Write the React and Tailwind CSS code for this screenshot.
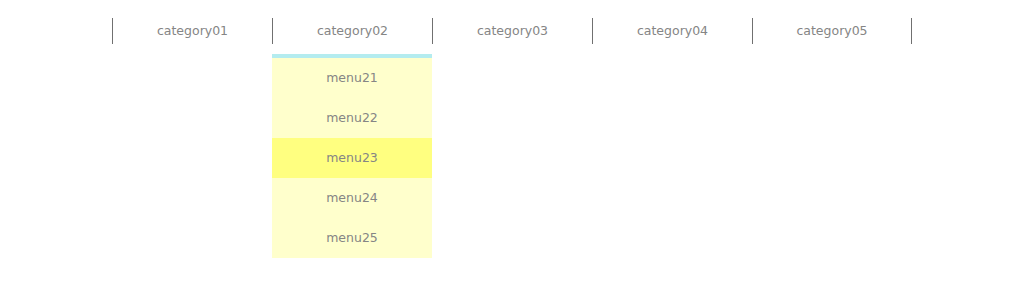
import { useState } from 'react'

const categories = ['category01', 'category02', 'category03', 'category04', 'category05']
const menus = ['menu21', 'menu22', 'menu23', 'menu24', 'menu25']

export default function App() {
  const [open] = useState(1)
  const [hover] = useState(2)

  return (
    <div className="w-[1024px] h-[288px] bg-white font-['DejaVu_Sans',sans-serif] text-[12.5px] text-[#858585]">
      <ul className="flex w-[801px] ml-[112px] pt-[18px]">
        {categories.map((c, i) => (
          <li
            key={c}
            className={`relative w-[160px] h-[26px] flex items-center justify-center border-l border-[#707070] ${i === categories.length - 1 ? 'border-r' : ''}`}
          >
            {c}
            {i === open && (
              <ul className="absolute -left-px top-[36px] w-[160px] border-t-4 border-[#b4ecef] bg-[#ffffcc]">
                {menus.map((m, j) => (
                  <li
                    key={m}
                    className={`h-[40px] flex items-center justify-center ${j === hover ? 'bg-[#ffff80]' : ''}`}
                  >
                    {m}
                  </li>
                ))}
              </ul>
            )}
          </li>
        ))}
      </ul>
    </div>
  )
}
